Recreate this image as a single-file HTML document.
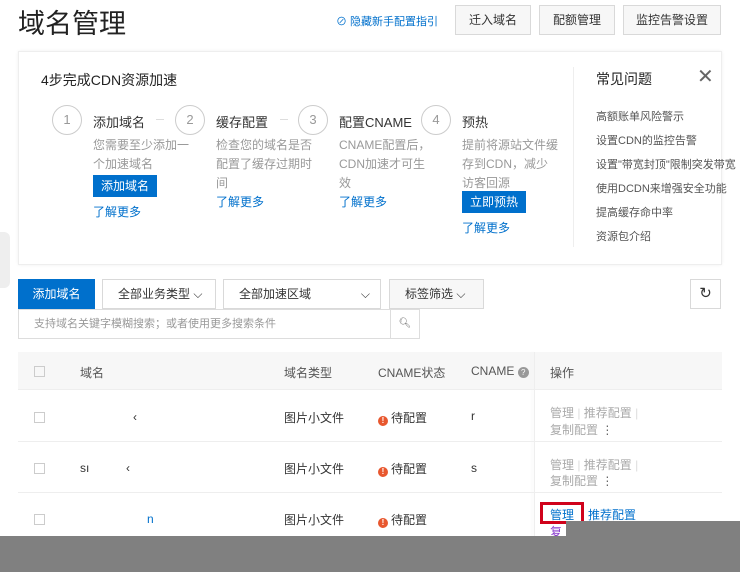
<!DOCTYPE html>
<html><head><meta charset="utf-8"><style>
*{margin:0;padding:0;box-sizing:border-box}
body{width:740px;height:572px;overflow:hidden;background:#fff;font-family:"Liberation Sans","Noto Sans CJK SC",sans-serif;color:#333;position:relative;font-size:12px}
.a{position:absolute;white-space:nowrap}
.btn{position:absolute;border:1px solid #d9d9d9;background:#f7f7f7;height:30px;line-height:28px;text-align:center;font-size:12px;color:#333}
.circle{position:absolute;width:30px;height:30px;border:1px solid #ccc;border-radius:50%;text-align:center;line-height:28px;color:#999;font-size:13px}
.g{color:#999;font-size:12px;line-height:19px;position:absolute}
.lk{color:#0070cc;position:absolute;font-size:12px}
.pb{position:absolute;background:#0070cc;color:#fff;height:22px;line-height:22px;padding:0 8px;font-size:12px}
.faq{position:absolute;left:596px;font-size:11px;color:#555}
.row{position:absolute;left:18px;width:704px;border-bottom:1px solid #eee}
.cb{position:absolute;left:34px;width:11px;height:11px;border:1px solid #ccc}
.warn{display:inline-block;width:10px;height:10px;border-radius:50%;background:#e8572e;color:#fff;font-size:8px;line-height:10px;text-align:center;font-weight:bold;vertical-align:-1px;margin-right:3px}
.op{color:#aaa}
</style></head><body>
<div class="a" style="left:18px;top:2px;font-size:27px;color:#222">域名管理</div>
<div class="a" style="left:336px;top:13px;font-size:11px;color:#0070cc">⊘ 隐藏新手配置指引</div>
<div class="btn" style="left:455px;top:5px;width:76px">迁入域名</div>
<div class="btn" style="left:539px;top:5px;width:76px">配额管理</div>
<div class="btn" style="left:623px;top:5px;width:98px">监控告警设置</div>

<div class="a" style="left:18px;top:51px;width:704px;height:214px;border:1px solid #eee;box-shadow:0 0 3px #f0f0f0"></div>
<div class="a" style="left:41px;top:70px;font-size:14px;color:#222">4步完成CDN资源加速</div>
<div class="circle" style="left:52px;top:105px">1</div>
<div class="a" style="left:93px;top:112px;font-size:13px">添加域名</div><div class="a" style="left:156px;top:119px;width:8px;border-top:1px solid #ddd"></div>
<div class="circle" style="left:175px;top:105px">2</div>
<div class="a" style="left:216px;top:112px;font-size:13px">缓存配置</div><div class="a" style="left:280px;top:119px;width:8px;border-top:1px solid #ddd"></div>
<div class="circle" style="left:298px;top:105px">3</div>
<div class="a" style="left:339px;top:112px;font-size:13px">配置CNAME</div>
<div class="circle" style="left:421px;top:105px">4</div>
<div class="a" style="left:462px;top:112px;font-size:13px">预热</div>
<div class="g" style="left:93px;top:136px">您需要至少添加一<br>个加速域名</div>
<div class="pb" style="left:93px;top:175px">添加域名</div>
<div class="lk" style="left:93px;top:203px">了解更多</div>
<div class="g" style="left:216px;top:136px">检查您的域名是否<br>配置了缓存过期时<br>间</div>
<div class="lk" style="left:216px;top:193px">了解更多</div>
<div class="g" style="left:339px;top:136px">CNAME配置后，<br>CDN加速才可生<br>效</div>
<div class="lk" style="left:339px;top:193px">了解更多</div>
<div class="g" style="left:462px;top:136px">提前将源站文件缓<br>存到CDN，减少<br>访客回源</div>
<div class="pb" style="left:462px;top:191px">立即预热</div>
<div class="lk" style="left:462px;top:219px">了解更多</div>
<div class="a" style="left:573px;top:67px;height:180px;border-left:1px solid #eee"></div>
<div class="a" style="left:596px;top:69px;font-size:14px;color:#222">常见问题</div>
<div class="a" style="left:697px;top:64px;font-size:20px;color:#666">✕</div>
<div class="faq" style="top:108px">高额账单风险警示</div>
<div class="faq" style="top:132px">设置CDN的监控告警</div>
<div class="faq" style="top:156px">设置"带宽封顶"限制突发带宽</div>
<div class="faq" style="top:180px">使用DCDN来增强安全功能</div>
<div class="faq" style="top:204px">提高缓存命中率</div>
<div class="faq" style="top:228px">资源包介绍</div>
<div class="a" style="left:0;top:232px;width:10px;height:56px;background:#eee;border-radius:0 6px 6px 0"></div>

<div class="a" style="left:18px;top:279px;width:77px;height:30px;background:#0070cc;color:#fff;line-height:30px;text-align:center;font-size:12px">添加域名</div>
<div class="btn" style="left:102px;top:279px;width:114px;background:#fff;text-align:left;padding-left:15px">全部业务类型 ⌵</div>
<div class="btn" style="left:223px;top:279px;width:158px;background:#fff;text-align:left;padding-left:15px">全部加速区域<span style="position:absolute;right:10px">⌵</span></div>
<div class="btn" style="left:389px;top:279px;width:95px;text-align:left;padding-left:15px">标签筛选 ⌵</div>
<div class="btn" style="left:690px;top:279px;width:31px;background:#fff;font-size:15px">↻</div>
<div class="a" style="left:18px;top:309px;width:373px;height:30px;border:1px solid #ddd;color:#999;font-size:11px;line-height:28px;padding-left:15px">支持域名关键字模糊搜索；或者使用更多搜索条件</div>
<div class="a" style="left:390px;top:309px;width:30px;height:30px;border:1px solid #ddd;text-align:center;line-height:28px;color:#666;font-size:10px">🔍︎</div>

<div class="row" style="top:352px;height:38px;background:#f7f7f7"></div>
<div class="cb" style="top:366px"></div>
<div class="a" style="left:80px;top:364px;color:#555">域名</div>
<div class="a" style="left:284px;top:364px;color:#555">域名类型</div>
<div class="a" style="left:378px;top:364px;color:#555">CNAME状态</div>
<div class="a" style="left:471px;top:364px;color:#555">CNAME <span style="display:inline-block;width:11px;height:11px;border-radius:50%;background:#999;color:#fff;font-size:8px;text-align:center;line-height:11px">?</span></div>
<div class="a" style="left:534px;top:352px;height:190px;border-left:1px solid #eee;box-shadow:-2px 0 3px #f2f2f2"></div>
<div class="a" style="left:550px;top:364px;color:#555">操作</div>

<div class="row" style="top:390px;height:52px"></div>
<div class="cb" style="top:412px"></div>
<div class="a" style="left:133px;top:410px">‹</div>
<div class="a" style="left:284px;top:409px">图片小文件</div>
<div class="a" style="left:378px;top:409px"><span class="warn">!</span>待配置</div>
<div class="a" style="left:471px;top:409px">r</div>
<div class="a op" style="left:550px;top:404px">管理 <span style="color:#ddd">|</span> 推荐配置 <span style="color:#ddd">|</span></div>
<div class="a op" style="left:550px;top:421px">复制配置 <span style="color:#666">⋮</span></div>

<div class="row" style="top:442px;height:51px"></div>
<div class="cb" style="top:463px"></div>
<div class="a" style="left:80px;top:461px">sı &nbsp; &nbsp; &nbsp; &nbsp; &nbsp; ‹</div>
<div class="a" style="left:284px;top:460px">图片小文件</div>
<div class="a" style="left:378px;top:460px"><span class="warn">!</span>待配置</div>
<div class="a" style="left:471px;top:461px">s</div>
<div class="a op" style="left:550px;top:456px">管理 <span style="color:#ddd">|</span> 推荐配置 <span style="color:#ddd">|</span></div>
<div class="a op" style="left:550px;top:472px">复制配置 <span style="color:#666">⋮</span></div>

<div class="cb" style="top:514px"></div>
<div class="a" style="left:147px;top:512px;color:#0070cc">n</div>
<div class="a" style="left:284px;top:511px">图片小文件</div>
<div class="a" style="left:378px;top:511px"><span class="warn">!</span>待配置</div>
<div class="a" style="left:540px;top:502px;width:44px;height:22px;border:3px solid #d0021b"></div>
<div class="a" style="left:550px;top:506px;color:#0070cc">管理</div>
<div class="a" style="left:588px;top:506px;color:#0070cc">推荐配置</div>
<div class="a" style="left:550px;top:523px;color:#8a3ccf">复</div>

<div class="a" style="left:566px;top:521px;width:174px;height:51px;background:#808080"></div>
<div class="a" style="left:0;top:536px;width:740px;height:36px;background:#808080"></div>
</body></html>
